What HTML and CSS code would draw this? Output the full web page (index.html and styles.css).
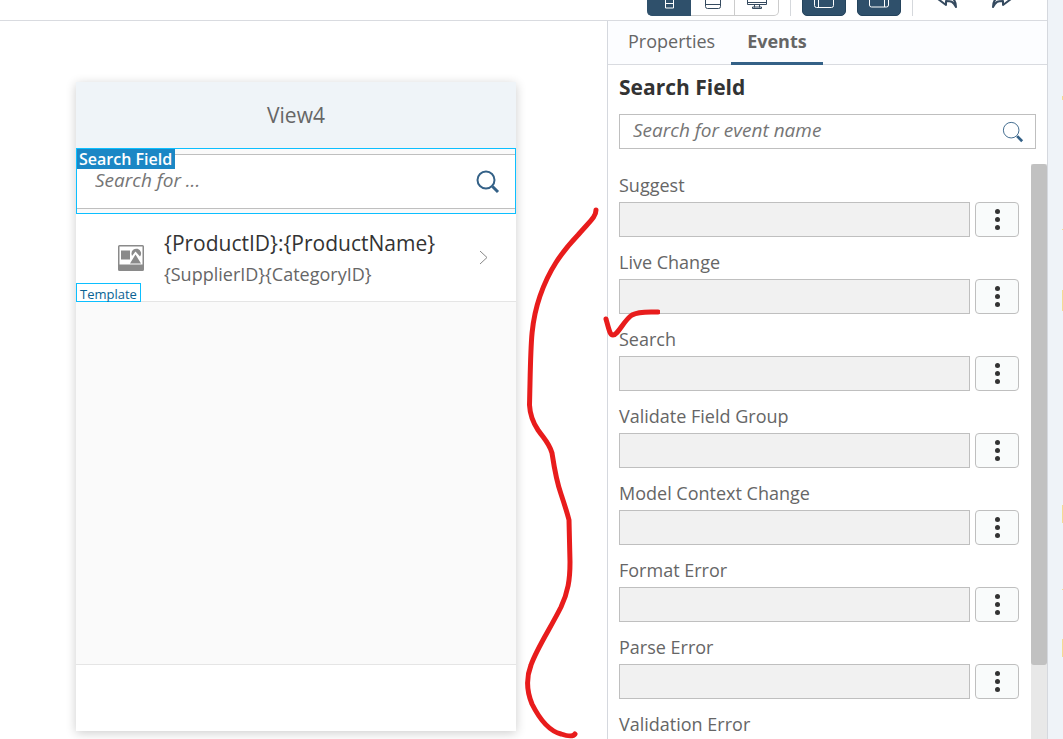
FILE: index.html
```html
<!DOCTYPE html>
<html lang="en">
<head>
<meta charset="utf-8">
<title>View4 layout editor</title>
<link rel="stylesheet" href="styles.css">
</head>
<body>
<div class="editor">
  <header class="toolbar">
    <div class="segmented">
      <button class="seg seg-on" type="button" aria-label="Phone"><svg width="24" height="24" viewBox="0 0 24 24"><path d="M8.500 2.500h8v19.500h-8zM8.500 17.500h8"/></svg></button>
      <button class="seg" type="button" aria-label="Tablet"><svg width="24" height="24" viewBox="0 0 24 24"><rect x="4.500" y="2" width="15" height="20.500" rx="2"/><path d="M4.500 18.500h15"/></svg></button>
      <button class="seg" type="button" aria-label="Desktop"><svg width="24" height="24" viewBox="0 0 24 24"><path d="M2.500 4v14.500h19V4M2.500 16.500h19M9.500 18.500v3M14.500 18.500v3M7.500 22.500v-1.500h9v1.500z"/></svg></button>
    </div>
    <span class="divider"></span>
    <button class="toggle" type="button" aria-label="Left panel"><svg width="24" height="24" viewBox="0 0 24 24"><rect x="2.500" y="4" width="19" height="17.500" rx="2"/><path d="M6.500 4v17.500"/></svg></button>
    <button class="toggle" type="button" aria-label="Right panel"><svg width="24" height="24" viewBox="0 0 24 24"><rect x="2.500" y="4" width="19" height="17" rx="2"/><path d="M17.500 4v17"/></svg></button>
    <span class="divider"></span>
    <button class="plain" type="button" aria-label="Undo"><svg width="24" height="24" viewBox="0 0 24 24"><path d="M12 7l-8 6 8 6v-4c5 0 7 0 10 6 0-7-4-11-10-10z"/></svg></button>
    <button class="plain" type="button" aria-label="Redo"><svg width="24" height="24" viewBox="0 0 24 24"><path d="M14 7l8 6-8 6v-4c-5 0-7 0-10 6 0-7 4-11 10-10z"/></svg></button>
  </header>
  <div class="work">
    <main class="canvas">
      <section class="device">
        <h1 class="view-title">View4</h1>
        <div class="search-control">
          <label class="tag" for="search-for">Search Field</label>
          <div class="search-row">
            <input id="search-for" type="text" placeholder="Search for ...">
            <svg class="lens" width="24" height="24" viewBox="0 0 24 24"><circle cx="10" cy="10" r="8.500"/><path d="M16.500 16.500l5.500 5.500" class="handle"/></svg>
          </div>
        </div>
        <div class="item">
          <svg class="picture" width="28" height="28" viewBox="0 0 28 28"><path fill-rule="evenodd" d="M2.500 1h23q1.500 0 1.500 1.500v23q0 1.500-1.500 1.500h-23q-1.500 0-1.500-1.500v-23q0-1.500 1.500-1.500zM2.500 2.500v18h23v-18z"/><path d="M4 6.500h9v9H4zM18.500 10.500l5.500 9H13z"/><path d="M14.500 10a4.800 4.800 0 1 1 8.500 2.500l-4.500-5-3.500 4.500z"/></svg>
          <div class="item-text">
            <div class="item-title">{ProductID}:{ProductName}</div>
            <div class="item-sub">{SupplierID}{CategoryID}</div>
          </div>
          <svg class="chevron" width="10" height="14" viewBox="0 0 10 14"><path d="M1 0l7 6.500-7 6.500"/></svg>
          <span class="template">Template</span>
        </div>
        <div class="filler"></div>
        <div class="footer-bar"></div>
      </section>
    </main>
    <aside class="panel">
      <nav class="tabs">
        <button class="tab" type="button">Properties</button>
        <button class="tab tab-on" type="button">Events</button>
      </nav>
      <h2 class="panel-title">Search Field</h2>
      <div class="filter">
        <input type="text" aria-label="Search for event name" placeholder="Search for event name">
        <svg class="lens lens-thin" width="22" height="22" viewBox="0 0 24 24"><circle cx="10" cy="10" r="8.500"/><path d="M16.500 16.500l5.500 5.500" class="handle"/></svg>
      </div>
      <div class="scroll">
        <div class="events">
          <div class="event"><label for="e1">Suggest</label><input id="e1" type="text" readonly><button type="button" aria-label="Suggest options"><i></i><i></i><i></i></button></div>
          <div class="event"><label for="e2">Live Change</label><input id="e2" type="text" readonly><button type="button" aria-label="Live Change options"><i></i><i></i><i></i></button></div>
          <div class="event"><label for="e3">Search</label><input id="e3" type="text" readonly><button type="button" aria-label="Search options"><i></i><i></i><i></i></button></div>
          <div class="event"><label for="e4">Validate Field Group</label><input id="e4" type="text" readonly><button type="button" aria-label="Validate Field Group options"><i></i><i></i><i></i></button></div>
          <div class="event"><label for="e5">Model Context Change</label><input id="e5" type="text" readonly><button type="button" aria-label="Model Context Change options"><i></i><i></i><i></i></button></div>
          <div class="event"><label for="e6">Format Error</label><input id="e6" type="text" readonly><button type="button" aria-label="Format Error options"><i></i><i></i><i></i></button></div>
          <div class="event"><label for="e7">Parse Error</label><input id="e7" type="text" readonly><button type="button" aria-label="Parse Error options"><i></i><i></i><i></i></button></div>
          <div class="event"><label for="e8">Validation Error</label><input id="e8" type="text" readonly><button type="button" aria-label="Validation Error options"><i></i><i></i><i></i></button></div>
        </div>
        <div class="track"><div class="thumb"></div></div>
      </div>
      <svg class="ink" width="140" height="540" viewBox="520 200 140 540"><path d="M596 210C596 217 590 221 578 235C561 253 549 270 540 296C530 325 531 345 529.500 405C530 415 534 424 538 430C545 440 549 443 552 453C554 466 556 480 561 494C564 503 567 512 569 520L570 562C570 580 568 592 561 607C550 629 537 648 531 665C526 678 527 692 532 704C540 720 549 731 561 734C567 736 573 737 575 734"/><path d="M606 319C609 330 610 335 613 335C618 335 624 320 632 315C639 311 649 312 658 312"/></svg>
    </aside>
  </div>
</div>
<div class="gutter"><svg width="2" height="739" viewBox="0 0 2 739"><path d="M1 96h1v4H1zM1 229h1v1H1zM1 290h1v21H1zM1 505h1v18H1zM1 589h1v1H1zM1 639h1v18H1z"/></svg></div>
</body>
</html>
```
FILE: styles.css
```css
* { box-sizing: border-box; }
body { margin: 0; height: 100vh; display: flex; overflow: hidden; background: #fff; color: #666; font-family: "Open Sans", "Noto Sans", sans-serif; font-size: 18px; }
button, input { font: inherit; color: inherit; margin: 0; }
svg { display: block; fill: none; stroke-linejoin: round; flex: none; }
.editor { flex: 1; min-width: 0; display: flex; flex-direction: column; }
.gutter { width: 16px; display: flex; justify-content: flex-end; border-left: 1px solid #d5d8de; background: #eff3f8; }
.gutter svg { fill: #f3dc93; }

.toolbar { height: 21px; border-bottom: 1px solid #d9dbe0; display: flex; justify-content: flex-end; align-items: flex-end; gap: 11px; padding: 0 24px 4px 0; overflow: hidden; }
.toolbar button { height: 36px; width: 44px; display: flex; justify-content: center; align-items: center; padding: 0; flex: none; }
.toolbar svg { stroke: #354a5f; stroke-width: 1; }
.segmented { display: flex; }
.segmented .seg { background: #fff; border: 1px solid #ccc; border-left-width: 0; }
.segmented .seg-on { background: #2f506b; border-color: #2f506b; border-radius: 0 0 0 5px; }
.segmented .seg:last-child { border-radius: 0 0 5px 0; }
.toolbar .toggle { background: #2f506b; border: 1px solid #24435c; border-radius: 5px; }
.toolbar .seg-on svg, .toolbar .toggle svg { stroke: #fff; }
.divider { width: 1px; height: 36px; background: #d5d8dc; }
.toolbar .plain { background: none; border: 0; }
.toolbar .plain svg { stroke-width: 2; }

.work { flex: 1; min-height: 0; display: flex; }
.canvas { flex: 1; min-width: 0; padding: 61px 91px 8px 76px; display: flex; }
.device { flex: 1; min-width: 0; display: flex; flex-direction: column; background: #fff; box-shadow: 0 2px 10px rgba(0,0,0,.2); }
.view-title { margin: 0; height: 66px; line-height: 66px; text-align: center; font-size: 21px; font-weight: 400; background: #eff4f8; }
.search-control { position: relative; height: 66px; padding: 5px 0 4px; border: 1px solid #0cbfff; background: #fafafa; }
.search-row { height: 55px; display: flex; align-items: center; padding: 0 15px 0 18px; border: solid #bfbfbf; border-width: 1px 0; background: #fff; }
.search-row input, .filter input { flex: 1; min-width: 0; border: 0; padding: 0 0 3px; outline: 0; background: none; font-size: 19px; }
input::placeholder { color: #757575; font-style: italic; opacity: 1; }
.lens { stroke: #346187; stroke-width: 2; }
.lens .handle { stroke-width: 3; }
.lens-thin { stroke-width: 1; }
.tag { position: absolute; left: 0; top: 0; height: 20px; padding: 0 3px 0 2px; line-height: 20px; font-size: 16px; font-weight: 600; color: #fff; background: #1b87c5; }
.item { position: relative; height: 88px; display: flex; align-items: center; padding: 0 27px 0 41px; border-bottom: 1px solid #e5e5e5; }
.picture { fill: #8a8a8a; }
.item-text { flex: 1; padding-left: 19px; }
.item-title { font-size: 21px; line-height: 32px; color: #333; }
.item-sub { font-size: 18px; line-height: 30px; }
.chevron { stroke: #888; }
.template { position: absolute; left: 0; bottom: -1px; height: 19px; padding: 0 3px; border: 1px solid #0cbfff; background: #fff; color: #0a6293; font-size: 13px; line-height: 20px; }
.filler { flex: 1; background: #fafafa; }
.footer-bar { height: 67px; border-top: 1px solid #e5e5e5; }

.panel { position: relative; width: 440px; display: flex; flex-direction: column; border-left: 1px solid #d5d8de; }
.tabs { height: 44px; display: flex; padding-left: 4px; background: #fcfdff; border-bottom: 1px solid #d9dbe0; }
.tab { height: 44px; padding: 0 16px 2px; border: 0; border-bottom: 3px solid transparent; background: none; }
.tab-on { font-weight: 700; border-bottom-color: #346187; }
.panel-title { margin: 0; padding: 5px 11px 0; font-size: 21px; line-height: 34px; height: 49px; color: #333; }
.filter { height: 35px; margin: 0 11px; padding: 0 11px 0 13px; display: flex; align-items: center; border: 1px solid #bfbfbf; }
.scroll { flex: 1; min-height: 0; margin-top: 15px; display: flex; overflow: hidden; }
.events { flex: 1; min-width: 0; padding: 5px 12px 0 11px; }
.event { display: grid; grid-template-columns: 1fr 44px; column-gap: 5px; height: 77px; grid-template-rows: 33px 35px; }
.event label { grid-column: 1 / 3; line-height: 32px; }
.event input { min-width: 0; width: 100%; border: 1px solid #bfbfbf; background: #f1f1f1; }
.event button { display: flex; flex-direction: column; gap: 3px; align-items: center; justify-content: center; padding: 0; border: 1px solid #bfbfbf; border-radius: 4px; background: #f9fbfb; }
.event i { width: 5px; height: 5px; border-radius: 50%; background: #333; }
.track { width: 16px; background: #e8e8e8; }
.thumb { height: 501px; border-radius: 3px; background: #c1c1c1; }
.ink { position: absolute; left: -88px; top: 179px; pointer-events: none; stroke: #e81c1c; stroke-width: 5; stroke-linecap: round; }
```
